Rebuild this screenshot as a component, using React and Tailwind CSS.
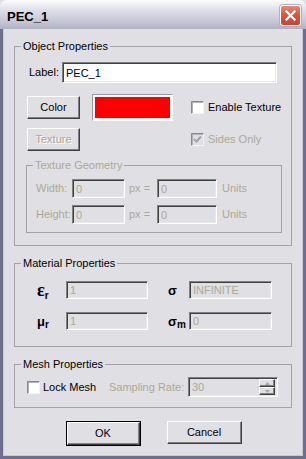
import React from 'react';

const raised =
  'border border-t-white border-l-white border-r-[#404040] border-b-[#404040] shadow-[inset_-1px_-1px_0_#808080]';
const sunken =
  'border border-t-[#808080] border-l-[#808080] border-r-white border-b-white shadow-[inset_1px_1px_0_#404040,inset_-1px_-1px_0_#e8e7ea]';
const gray = 'text-[#aca899]';

const Button = ({ children, disabled, className = '' }) => (
  <button
    type="button"
    className={`${raised} bg-[#e0dfe3] h-[23px] text-[11px] font-normal leading-none flex items-center justify-center ${
      disabled ? 'text-[#aca899] [text-shadow:1px_1px_0_#ffffff]' : 'text-black'
    } ${className}`}
  >
    {children}
  </button>
);

const Field = ({ value, disabled, className = '' }) => (
  <input
    readOnly
    value={value}
    className={`${sunken} ${disabled ? 'bg-[#e0dfe3] text-[#aca899]' : 'bg-white text-black'} pl-[3px] text-[11px] outline-none ${className}`}
  />
);

const CheckBox = ({ checked, disabled }) => (
  <span
    className={`w-[13px] h-[13px] shrink-0 flex items-center justify-center border border-t-[#8a8a8a] border-l-[#8a8a8a] border-r-[#f4f4f4] border-b-[#f4f4f4] shadow-[inset_1px_1px_0_#b0afb5] ${
      disabled ? 'bg-[#e0dfe3]' : 'bg-white'
    }`}
  >
    {checked && (
      <svg width="9" height="9" viewBox="0 0 9 9">
        <path d="M1 4 L3.5 6.5 L8 1.5" fill="none" stroke={disabled ? '#a3a2a8' : '#000'} strokeWidth="2" />
      </svg>
    )}
  </span>
);

const GroupBox = ({ title, disabled, className = '', children }) => (
  <fieldset className={`border border-[#a3a2a9] p-0 m-0 min-w-0 ${className}`}>
    <legend className={`ml-[6px] px-[2px] text-[11px] leading-[13px] ${disabled ? gray : 'text-black'}`}>{title}</legend>
    {children}
  </fieldset>
);

const Sym = ({ main, sub, big }) => (
  <span className="flex items-end font-bold text-black leading-none">
    <span className={big ? "font-['Liberation_Serif',serif] text-[18px]" : 'text-[13px]'}>{main}</span>
    <span className="text-[10px] leading-none -mb-[2px]">{sub}</span>
  </span>
);

export default function App() {
  return (
    <div className="w-[306px] h-[459px] flex flex-col bg-[#e0dfe3] font-['Liberation_Sans',Arial,sans-serif] text-[11px] text-black select-none">
      {/* title bar */}
      <div className="h-[29px] shrink-0 flex items-start justify-between pl-[7px] pr-[5px] rounded-t-[7px] bg-[linear-gradient(to_bottom,#fdfdfe_0%,#e6e6ee_25%,#cfcfdc_60%,#bdbdcd_85%,#b1b1c4_100%)]">
        <span className="mt-[10px] text-[13px] leading-[14px] font-bold text-black">PEC_1</span>
        <div className="mt-[5px] w-[21px] h-[21px] rounded-[3px] border border-white flex items-center justify-center bg-[linear-gradient(to_bottom,#e88a76_0%,#d9583f_45%,#c74532_100%)] shadow-[0_0_0_1px_#b3b0c4]">
          <svg width="11" height="11" viewBox="0 0 11 11">
            <path d="M1.5 1.5 L9.5 9.5 M9.5 1.5 L1.5 9.5" stroke="#fff" strokeWidth="2.2" strokeLinecap="square" />
          </svg>
        </div>
      </div>

      {/* body */}
      <div className="flex-1 flex flex-col border-x-[3px] border-b-[3px] border-[#6f6e8e] shadow-[inset_1px_0_0_#c9c8d6,inset_-1px_0_0_#c9c8d6,inset_0_-1px_0_#c9c8d6] px-[11px] pt-[11px]">
        <GroupBox title="Object Properties">
          <div className="pl-[11px] pr-[9px] pb-[12px]">
            <div className="mt-[9px] flex items-center">
              <span className="ml-[3px] w-[33px]">Label:</span>
              <Field value="PEC_1" className="w-[215px] h-[21px]" />
            </div>

            <div className="mt-[11px] h-[27px] flex items-center">
              <Button className="ml-[1px] w-[53px]">Color</Button>
              <div className="ml-[12px] w-[81px] h-[27px] p-[2px] bg-[#f6f6f6] border border-t-[#9a99a0] border-l-[#9a99a0] border-r-white border-b-white">
                <div className="w-full h-full bg-[#ff0000]" />
              </div>
              <span className="ml-[18px]">
                <CheckBox />
              </span>
              <span className="ml-[4px]">Enable Texture</span>
            </div>

            <div className="mt-[7px] h-[23px] flex items-center">
              <Button disabled className="ml-[1px] w-[53px]">Texture</Button>
              <span className="ml-[111px]">
                <CheckBox checked disabled />
              </span>
              <span className={`ml-[4px] ${gray}`}>Sides Only</span>
            </div>

            <GroupBox title="Texture Geometry" disabled className="mt-[8px]">
              <div className="pl-[9px] pb-[8px]">
                {['Width:', 'Height:'].map((l) => (
                  <div key={l} className={`mt-[7px] h-[19px] flex items-center ${gray}`}>
                    <span className="w-[36px]">{l}</span>
                    <Field disabled value="0" className="w-[53px] h-[19px]" />
                    <span className="ml-[4px] w-[28px]">px =</span>
                    <Field disabled value="0" className="w-[60px] h-[19px]" />
                    <span className="ml-[5px]">Units</span>
                  </div>
                ))}
              </div>
            </GroupBox>
          </div>
        </GroupBox>

        <GroupBox title="Material Properties" className="mt-[11px]">
          <div className="pl-[22px] pb-[16px]">
            <div className="mt-[11px] h-[18px] flex items-center">
              <span className="w-[29px]">
                <Sym main="ε" sub="r" big />
              </span>
              <Field disabled value="1" className="w-[82px] h-[18px]" />
              <span className="ml-[20px] w-[21px]">
                <Sym main="σ" sub="" />
              </span>
              <Field disabled value="INFINITE" className="w-[83px] h-[18px]" />
            </div>
            <div className="mt-[13px] h-[18px] flex items-center">
              <span className="w-[29px]">
                <Sym main="μ" sub="r" />
              </span>
              <Field disabled value="1" className="w-[82px] h-[18px]" />
              <span className="ml-[20px] w-[21px]">
                <Sym main="σ" sub="m" />
              </span>
              <Field disabled value="0" className="w-[83px] h-[18px]" />
            </div>
          </div>
        </GroupBox>

        <GroupBox title="Mesh Properties" className="mt-[11px]">
          <div className="pl-[12px] pb-[10px]">
            <div className="mt-[6px] h-[20px] flex items-center">
              <CheckBox />
              <span className="ml-[3px] w-[66px]">Lock Mesh</span>
              <span className={`w-[79px] ${gray}`}>Sampling Rate:</span>
              <div className={`${sunken} w-[90px] h-[20px] bg-[#e0dfe3] flex items-center justify-between pl-[3px] pr-[2px]`}>
                <span className={gray}>30</span>
                <div className="flex flex-col gap-0">
                  {['M0 3 L2.5 0 L5 3', 'M0 0 L2.5 3 L5 0'].map((d) => (
                    <div key={d} className={`${raised} w-[16px] h-[8px] bg-[#e0dfe3] flex items-center justify-center`}>
                      <svg width="5" height="3" viewBox="0 0 5 3">
                        <path d={d} fill="#aca899" />
                      </svg>
                    </div>
                  ))}
                </div>
              </div>
            </div>
          </div>
        </GroupBox>

        <div className="mt-[13px] flex justify-center gap-[26px] pl-[1px]">
          <div className="border border-black">
            <Button className="w-[73px] h-[21px]">OK</Button>
          </div>
          <Button className="w-[75px]">Cancel</Button>
        </div>
      </div>
    </div>
  );
}
